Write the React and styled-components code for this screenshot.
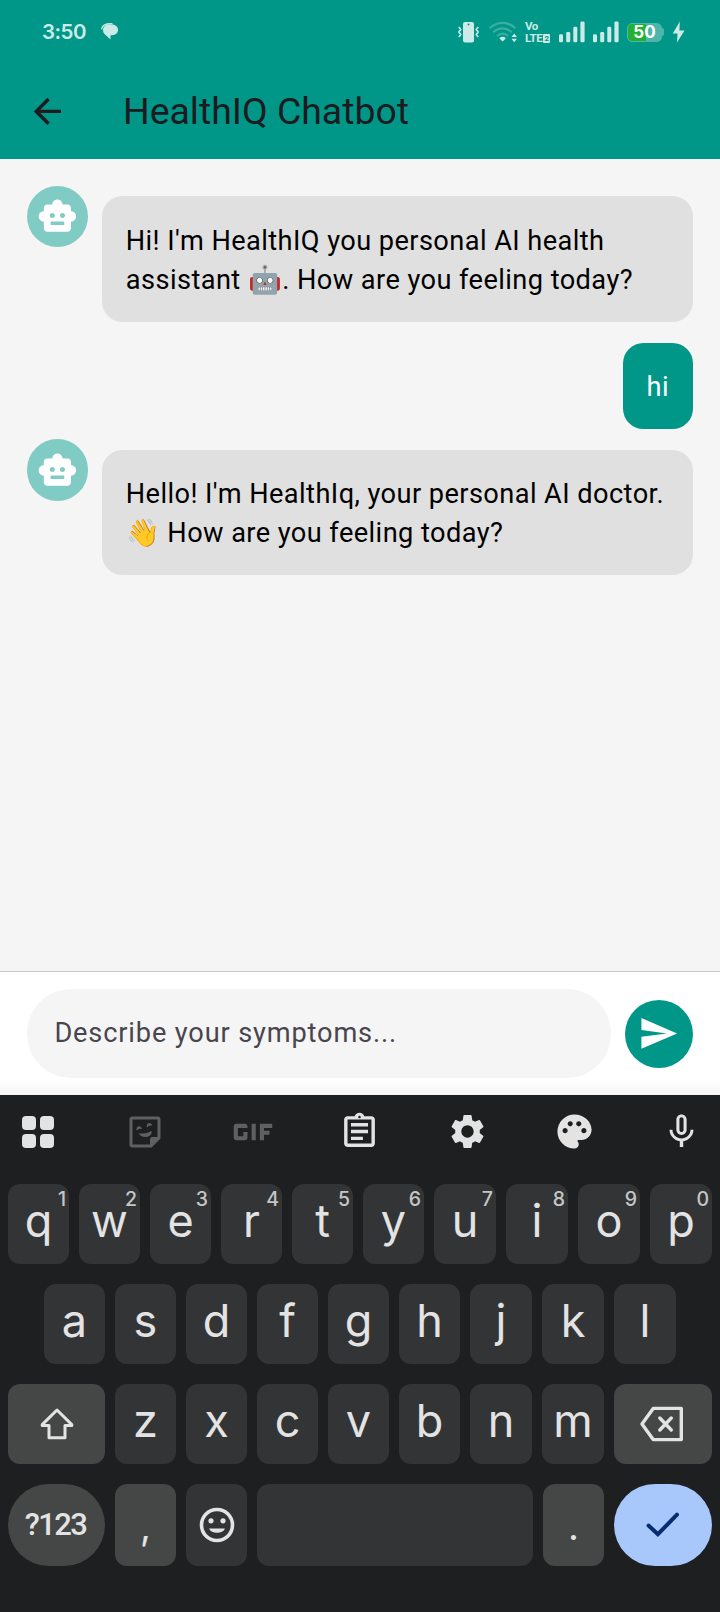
import React from "react";
import styled, { createGlobalStyle } from "styled-components";
import {
  MdArrowBack,
  MdSmartToy,
  MdSend,
  MdGif,
  MdOutlineAssignment,
  MdSettings,
  MdPalette,
  MdMicNone,
} from "react-icons/md";

const GlobalStyle = createGlobalStyle`
  * { box-sizing: border-box; }
  body { margin: 0; background: #f5f5f5; }
  svg { display: block; flex-shrink: 0; }
  button { border: 0; padding: 0; margin: 0; background: none; font: inherit; color: inherit; }
`;

const Screen = styled.div`
  width: 720px;
  height: 1612px;
  display: flex;
  flex-direction: column;
  overflow: hidden;
  background: #f5f5f5;
  font-family: Roboto, sans-serif;
`;

const Header = styled.header`
  height: 159px;
  background: #009788;
`;

const StatusBar = styled.div`
  height: 64px;
  padding: 0 35px 0 42px;
  display: flex;
  align-items: center;
  color: #cceae7;
`;

const Clock = styled.span`
  font: 600 20.5px/24px Inter, sans-serif;
  width: 58.5px;
  letter-spacing: -0.5px;
`;

const StatusIcons = styled.div`
  display: flex;
  align-items: center;
  gap: 8px;
  margin-left: auto;
`;

const Volte = styled.div`
  width: 26px;
  height: 24px;
  font: 700 11.5px/12px Roboto, sans-serif;
  letter-spacing: -0.4px;
`;

const VolteLine = styled.div`
  display: flex;
  align-items: center;
  height: 12px;
`;

const SimBadge = styled.span`
  width: 7px;
  height: 9px;
  margin-left: 1px;
  border-radius: 1px;
  background: #cceae7;
  color: #009788;
  font-size: 8px;
  line-height: 9px;
  text-align: center;
  letter-spacing: 0;
`;

const Battery = styled.div`
  width: 37px;
  height: 20px;
  display: flex;
  align-items: center;
`;

const BatteryBody = styled.div`
  width: 35px;
  height: 19px;
  border-radius: 5px;
  border: 1px solid #4db6ac;
  background: linear-gradient(90deg, #25b034 0 18px, #4db6ac 18px);
  color: #fff;
  font: 700 17px/17px Inter, sans-serif;
  text-align: center;
`;

const BatteryTip = styled.div`
  width: 2px;
  height: 8px;
  border-radius: 0 2px 2px 0;
  background: #4db6ac;
`;

const AppBar = styled.div`
  height: 95px;
  display: flex;
  align-items: center;
  padding-left: 27.2px;
  color: #1d1b20;
`;

const Title = styled.h1`
  margin: 0 0 2px 55px;
  font-size: 37.4px;
  line-height: 48px;
  font-weight: 400;
  white-space: nowrap;
`;

const Messages = styled.main`
  flex: 1;
  padding: 27.2px 27.2px 0;
`;

const MessageRow = styled.div`
  display: flex;
  align-items: flex-start;
  justify-content: ${(p) => (p.$mine ? "flex-end" : "flex-start")};
`;

const Avatar = styled.div`
  width: 61.2px;
  height: 61.2px;
  margin-right: 13.6px;
  border-radius: 50%;
  flex-shrink: 0;
  display: flex;
  align-items: center;
  justify-content: center;
  background: #80cbc4;
  color: #fff;
`;

const Bubble = styled.div`
  flex: ${(p) => (p.$mine ? "none" : "1")};
  margin: 10.2px 0;
  padding: 25.2px 23.8px 22.4px;
  border-radius: 20.4px;
  background: ${(p) => (p.$mine ? "#009788" : "#e0e0e0")};
  color: ${(p) => (p.$mine ? "#fff" : "#000")};
  font-size: 27.2px;
  line-height: 39.1px;
  letter-spacing: 0.425px;
  white-space: nowrap;
`;

const Composer = styled.div`
  height: 124px;
  padding: 0 27.2px;
  display: flex;
  align-items: center;
  gap: 13.6px;
  border-top: 1.7px solid #cac7cf;
  background: linear-gradient(#fff 0 108px, #f4f4f4 124px);
`;

const Field = styled.div`
  flex: 1;
  height: 88.4px;
  padding: 0 27.2px;
  display: flex;
  align-items: center;
  border-radius: 44.2px;
  background: #f5f5f5;
  color: #49454f;
  font-size: 27.2px;
  letter-spacing: 0.85px;
`;

const SendButton = styled.button`
  width: 68px;
  height: 68px;
  border-radius: 50%;
  display: flex;
  align-items: center;
  justify-content: center;
  background: #009788;
  color: #fff;
`;

const Keyboard = styled.section`
  height: 517px;
  background: #1e1f21;
  color: #e3e3e3;
`;

const Toolbar = styled.div`
  height: 89px;
  padding: 0 16px 16px;
  display: flex;
  align-items: center;
  justify-content: space-between;
`;

const Tool = styled.button`
  width: 44px;
  height: 44px;
  display: flex;
  align-items: center;
  justify-content: center;
  color: ${(p) => (p.$dim ? "#5f6160" : "#e3e3e3")};
`;

const Rows = styled.div`
  display: flex;
  flex-direction: column;
  gap: 20px;
`;

const KeyRow = styled.div`
  display: flex;
  gap: 10px;
  padding-left: ${(p) => (p.$indent ? 44 : 8)}px;
`;

const Key = styled.button`
  position: relative;
  width: ${(p) => p.$w || 61}px;
  height: ${(p) => p.$h || 80}px;
  display: flex;
  align-items: center;
  justify-content: center;
  border-radius: ${(p) => (p.$pill ? 41 : 12)}px;
  background: ${(p) => (p.$tone === "enter" ? "#a8c7fa" : p.$tone === "fn" ? "#444746" : "#333436")};
  color: ${(p) => (p.$tone === "enter" ? "#062e6f" : "#e3e3e3")};
`;

const Letter = styled.span`
  font: 400 45px/1 Inter, sans-serif;
  padding-bottom: 7px;
`;

const KeyHint = styled.span`
  position: absolute;
  top: 5px;
  right: 3px;
  font: 500 19.5px/20px Inter, sans-serif;
  color: #c4c7c5;
`;

const SymbolsLabel = styled.span`
  font: 500 31px/36px Roboto, sans-serif;
  letter-spacing: -1.6px;
  padding-right: 2px;
`;

const Punctuation = styled.span`
  font: 400 38px/1 Inter, sans-serif;
  padding-top: 1px;
`;

const ChatGlyph = () => (
  <svg width="18" height="18" viewBox="0 0 18 18">
    <path d="M.6 6.4C1.2 2 5.5.4 11.5.8" fill="none" stroke="currentColor" strokeWidth="1.3" />
    <path
      d="M8 1.6h3.2C14.4 1.6 17 4 17 7s-2.600 5.200-5.800 5.200H9.500V16.600L3.500 11C2.500 10 2 8.700 2 7.200 2 4 4.700 1.600 8 1.600z"
      fill="currentColor"
    />
  </svg>
);

const VibrateIcon = () => (
  <svg width="23" height="22" viewBox="0 0 23 22" fill="none" stroke="currentColor" strokeWidth="1.500">
    <rect x="5" y="1" width="11" height="20.500" rx="2" fill="currentColor" stroke="none" />
    <circle cx="10.500" cy="3.600" r="1" fill="#009788" stroke="none" />
    <path d="M.8 6l2 2.500-2 2.500 2 2.500-2 2.500M20.200 6l-2 2.500 2 2.500-2 2.500 2 2.500" />
  </svg>
);

const WifiIcon = () => (
  <svg width="28" height="22" viewBox="0 0 28 22" fill="none" stroke="currentColor" strokeWidth="2.200">
    <g opacity=".28">
      <path d="M.8 7.200C8.500.2 19 .2 26.500 7.200M4.400 11.200c5.400-5 13-5 18.400 0M8.200 15c3.400-2.900 7.600-2.900 11 0" />
    </g>
    <path d="M10.300 17.200q3.300-2.800 6.600 0L13.600 20.500z" fill="currentColor" stroke="none" />
    <path d="M22.500 16h5.500L25.200 12.600zM22.500 17.800h5.500l-2.800 3.400z" fill="currentColor" stroke="none" />
  </svg>
);

const SignalIcon = () => (
  <svg width="26" height="22" viewBox="0 0 26 22" fill="currentColor">
    <rect x="0" y="13.300" width="4" height="8" rx="1.300" />
    <rect x="7.200" y="11" width="4" height="10.300" rx="1.300" />
    <rect x="14.300" y="5.700" width="4" height="15.600" rx="1.300" />
    <rect x="21.400" y=".5" width="4.200" height="20.800" rx="1.300" />
  </svg>
);

const BoltIcon = () => (
  <svg width="13" height="22" viewBox="0 0 13 22" fill="currentColor">
    <path d="M7.800 .6L.8 12.600h4.700l-.5 9L12.500 9.400H7.400z" />
  </svg>
);

const GridIcon = () => (
  <svg width="32" height="32" viewBox="0 0 32 32" fill="currentColor">
    <rect width="14" height="14" rx="4" />
    <rect x="18" width="14" height="14" rx="4" />
    <rect y="18" width="14" height="14" rx="4" />
    <rect x="18" y="18" width="14" height="14" rx="4" />
  </svg>
);

const StickerIcon = () => (
  <svg width="32" height="32" viewBox="0 0 32 32" fill="currentColor">
    <path d="M3.500 2h25a1.500 1.500 0 0 1 1.500 1.500V22l-8 8H3.500A1.500 1.500 0 0 1 2 28.500v-25A1.500 1.500 0 0 1 3.500 2z" fill="none" stroke="currentColor" strokeWidth="3" />
    <path d="M31 21h-7.500a2.500 2.500 0 0 0-2.500 2.500V31z" />
    <path d="M9.600 17.200c3 .9 8.400.3 12.800-2.200 1 2.500-1.200 5.700-5.200 6-3.600.3-6.300-1.200-7.600-3.800z" />
    <path d="M7.500 14.800c-.8-5.600 4.700-5.800 5.600-1.500-2-1-3.800-.4-5.600 1.500zM17.800 11.400c-.8-5.600 4.800-5.300 5.500-1.500-2-1-3.600-.4-5.500 1.500z" />
  </svg>
);

const ShiftIcon = () => (
  <svg width="34" height="34" viewBox="0 0 34 34" fill="none" stroke="currentColor" strokeWidth="3" strokeLinejoin="round">
    <path d="M17 3L2.200 17.600v1H9v12.200h16V18.600h6.800v-1z" />
  </svg>
);

const BackspaceIcon = () => (
  <svg width="47" height="36" viewBox="0 0 47 36" fill="none" stroke="currentColor" strokeWidth="3.400" strokeLinejoin="round">
    <path d="M13.200 2.400H41.300V33.600H13.200L2 18z" />
    <path d="M19.800 12l11.500 12M31.300 12L19.800 24" strokeLinecap="round" />
  </svg>
);

const SmileIcon = () => (
  <svg width="36" height="36" viewBox="0 0 36 36" fill="currentColor">
    <circle cx="18" cy="18" r="15.500" fill="none" stroke="currentColor" strokeWidth="3.600" />
    <circle cx="12" cy="13.800" r="2.600" />
    <circle cx="24" cy="13.800" r="2.600" />
    <path d="M10 21.500h16a8.500 6.500 0 0 1-16 0z" />
  </svg>
);

const CheckIcon = () => (
  <svg width="36" height="28" viewBox="0 0 36 28" fill="none" stroke="currentColor" strokeWidth="4" strokeLinecap="round">
    <path d="M3.500 14.500l9.400 8.700L32 3.700" />
  </svg>
);

const messages = [
  { id: 1, lines: ["Hi! I'm HealthIQ you personal AI health", "assistant 🤖. How are you feeling today?"] },
  { id: 2, mine: true, lines: ["hi"] },
  { id: 3, lines: ["Hello! I'm HealthIq, your personal AI doctor.", "👋 How are you feeling today?"] },
];

const topKeys = "qwertyuiop".split("");
const homeKeys = "asdfghjkl".split("");
const bottomKeys = "zxcvbnm".split("");

export default function App() {
  return (
    <Screen>
      <GlobalStyle />
      <Header>
        <StatusBar>
          <Clock>3:50</Clock>
          <ChatGlyph />
          <StatusIcons>
            <VibrateIcon />
            <WifiIcon />
            <Volte>
              <VolteLine>Vo</VolteLine>
              <VolteLine>
                LTE<SimBadge>2</SimBadge>
              </VolteLine>
            </Volte>
            <SignalIcon />
            <SignalIcon />
            <Battery>
              <BatteryBody>50</BatteryBody>
              <BatteryTip />
            </Battery>
            <BoltIcon />
          </StatusIcons>
        </StatusBar>
        <AppBar>
          <MdArrowBack size={40.8} />
          <Title>HealthIQ Chatbot</Title>
        </AppBar>
      </Header>

      <Messages>
        {messages.map((m) => (
          <MessageRow key={m.id} $mine={m.mine}>
            {!m.mine && (
              <Avatar>
                <MdSmartToy size={40.8} />
              </Avatar>
            )}
            <Bubble $mine={m.mine}>
              {m.lines.map((line) => (
                <div key={line}>{line}</div>
              ))}
            </Bubble>
          </MessageRow>
        ))}
      </Messages>

      <Composer>
        <Field>Describe your symptoms...</Field>
        <SendButton>
          <MdSend size={40.8} />
        </SendButton>
      </Composer>

      <Keyboard>
        <Toolbar>
          <Tool><GridIcon /></Tool>
          <Tool $dim><StickerIcon /></Tool>
          <Tool $dim><MdGif size={66} /></Tool>
          <Tool><MdOutlineAssignment size={41} /></Tool>
          <Tool><MdSettings size={41} /></Tool>
          <Tool><MdPalette size={41} /></Tool>
          <Tool><MdMicNone size={41} /></Tool>
        </Toolbar>
        <Rows>
          <KeyRow>
            {topKeys.map((k, i) => (
              <Key key={k} $w={i > 5 ? 62 : 61}>
                <Letter>{k}</Letter>
                <KeyHint>{(i + 1) % 10}</KeyHint>
              </Key>
            ))}
          </KeyRow>
          <KeyRow $indent>
            {homeKeys.map((k, i) => (
              <Key key={k} $w={i > 5 ? 62 : 61}><Letter>{k}</Letter></Key>
            ))}
          </KeyRow>
          <KeyRow>
            <Key $w={97} $tone="fn"><ShiftIcon /></Key>
            {bottomKeys.map((k, i) => (
              <Key key={k} $w={i > 4 ? 62 : 61}><Letter>{k}</Letter></Key>
            ))}
            <Key $w={98} $tone="fn"><BackspaceIcon /></Key>
          </KeyRow>
          <KeyRow>
            <Key $w={97} $h={82} $pill $tone="fn"><SymbolsLabel>?123</SymbolsLabel></Key>
            <Key $h={82} $tone="fn"><Punctuation>,</Punctuation></Key>
            <Key $h={82}><SmileIcon /></Key>
            <Key $w={276} $h={82} />
            <Key $h={82} $tone="fn"><Punctuation>.</Punctuation></Key>
            <Key $w={98} $h={82} $pill $tone="enter"><CheckIcon /></Key>
          </KeyRow>
        </Rows>
      </Keyboard>
    </Screen>
  );
}
